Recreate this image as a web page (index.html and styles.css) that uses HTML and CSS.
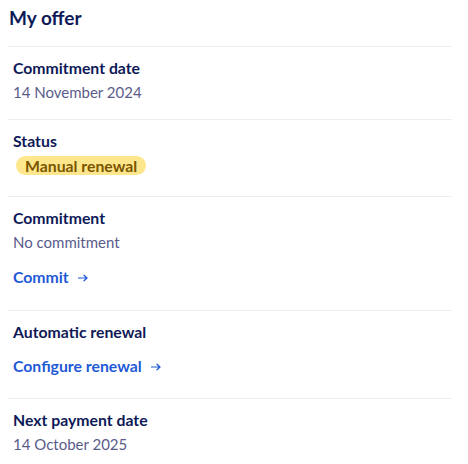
FILE: index.html
```html
<!DOCTYPE html>
<html lang="en">
<head>
<meta charset="utf-8">
<link rel="stylesheet" href="styles.css">
</head>
<body>
<section class="offer">
  <h2 class="title">My offer</h2>
  <div class="row">
    <div class="label">Commitment date</div>
    <div class="value">14 November 2024</div>
  </div>
  <div class="row">
    <div class="label">Status</div>
    <div class="badge-wrap"><span class="badge">Manual renewal</span></div>
  </div>
  <div class="row">
    <div class="label">Commitment</div>
    <div class="value">No commitment</div>
    <a class="link link-after-value" href="#">Commit <svg class="arrow" width="10" height="8" viewBox="0 0 10 8"><path d="M0.5 4H9M6 1.2L9 4L6 6.8" fill="none" stroke="currentColor" stroke-width="1.2" stroke-linecap="round" stroke-linejoin="round"/></svg></a>
  </div>
  <div class="row">
    <div class="label">Automatic renewal</div>
    <a class="link" href="#">Configure renewal <svg class="arrow" width="10" height="8" viewBox="0 0 10 8"><path d="M0.5 4H9M6 1.2L9 4L6 6.8" fill="none" stroke="currentColor" stroke-width="1.2" stroke-linecap="round" stroke-linejoin="round"/></svg></a>
  </div>
  <div class="row">
    <div class="label">Next payment date</div>
    <div class="value">14 October 2025</div>
  </div>
</section>
</body>
</html>
```
FILE: styles.css
```css
html, body {
  margin: 0;
  padding: 0;
  background: #fff;
}
body {
  font-family: "Lato", "Open Sans", sans-serif;
  color: #0e1a57;
}
.offer {
  width: 444px;
  padding: 0 8px;
}
.title {
  margin: 0;
  padding: 5px 1px 0;
  height: 46px;
  box-sizing: border-box;
  font-size: 19px;
  line-height: 26px;
  font-weight: 700;
  color: #0e1a57;
}
.row {
  border-top: 1px solid #eeeef2;
  padding: 9px 5px 15px;
  display: flex;
  flex-direction: column;
  align-items: flex-start;
}
.label {
  font-size: 15.8px;
  font-weight: 700;
  line-height: 24px;
  color: #0e1a57;
}
.value {
  font-size: 15px;
  line-height: 24px;
  color: #5a5c8a;
}
.badge-wrap {
  padding: 0 0 4px;
  height: 24px;
  display: flex;
  align-items: center;
}
.badge {
  display: inline-block;
  margin-left: 3px;
  padding: 0 9px;
  background: #fde68b;
  color: #7a5500;
  border-radius: 10px;
  font-size: 15.8px;
  font-weight: 700;
  line-height: 19px;
}
.link {
  display: inline-flex;
  align-items: center;
  margin: 10px 0 5px;
  font-size: 15.8px;
  font-weight: 700;
  line-height: 24px;
  color: #1f5ad6;
  text-decoration: none;
}
.link-after-value {
  margin: 11px 0 6px;
}
.arrow {
  margin-left: 9px;
  margin-top: 1px;
}
```
